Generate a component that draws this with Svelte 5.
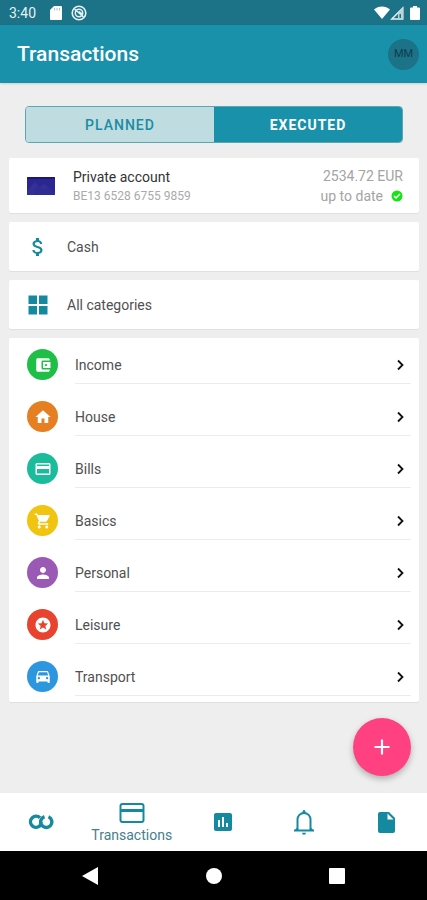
<script>
  const categories = [
    { name: 'Income', color: '#1fbf47', icon: 'M21 18v1c0 1.1-.9 2-2 2H5c-1.11 0-2-.9-2-2V5c0-1.1.89-2 2-2h14c1.1 0 2 .9 2 2v1h-9c-1.11 0-2 .9-2 2v8c0 1.1.89 2 2 2h9zm-9-2h10V8H12v8zm4-2.5c-.83 0-1.5-.67-1.5-1.5s.67-1.5 1.5-1.5 1.5.67 1.5 1.5-.67 1.5-1.5 1.5z' },
    { name: 'House', color: '#e67e22', icon: 'M10 20v-6h4v6h5v-8h3L12 3 2 12h3v8z' },
    { name: 'Bills', color: '#1abc9c', icon: 'M20 4H4c-1.11 0-1.99.89-1.99 2L2 18c0 1.11.89 2 2 2h16c1.11 0 2-.89 2-2V6c0-1.11-.89-2-2-2zm0 14H4v-6h16v6zm0-10H4V6h16v2z' },
    { name: 'Basics', color: '#f1c40f', icon: 'M7 18c-1.1 0-1.99.9-1.99 2S5.9 22 7 22s2-.9 2-2-.9-2-2-2zM1 2v2h2l3.6 7.59-1.35 2.45c-.16.28-.25.61-.25.96 0 1.1.9 2 2 2h12v-2H7.42c-.14 0-.25-.11-.25-.25l.03-.12.9-1.63h7.45c.75 0 1.41-.41 1.75-1.03l3.58-6.49A1 1 0 0 0 20 4H5.21l-.94-2H1zm16 16c-1.1 0-1.99.9-1.99 2s.89 2 1.99 2 2-.9 2-2-.9-2-2-2z' },
    { name: 'Personal', color: '#9b59b6', icon: 'M12 12c2.21 0 4-1.79 4-4s-1.79-4-4-4-4 1.79-4 4 1.79 4 4 4zm0 2c-2.67 0-8 1.34-8 4v2h16v-2c0-2.66-5.33-4-8-4z' },
    { name: 'Leisure', color: '#e8432f', icon: 'M11.99 2C6.47 2 2 6.48 2 12s4.47 10 9.99 10C17.52 22 22 17.52 22 12S17.52 2 11.99 2zm4.24 16L12 15.45 7.77 18l1.12-4.81-3.73-3.23 4.92-.42L12 5l1.92 4.53 4.92.42-3.73 3.23L16.23 18z' },
    { name: 'Transport', color: '#2c97de', icon: 'M18.92 5.01C18.72 4.42 18.16 4 17.5 4h-11c-.66 0-1.21.42-1.42 1.01L3 11v8c0 .55.45 1 1 1h1c.55 0 1-.45 1-1v-1h12v1c0 .55.45 1 1 1h1c.55 0 1-.45 1-1v-8l-2.08-5.99zM6.5 15c-.83 0-1.5-.67-1.5-1.5S5.67 12 6.5 12s1.5.67 1.5 1.5S7.33 15 6.5 15zm11 0c-.83 0-1.5-.67-1.5-1.5s.67-1.5 1.5-1.5 1.5.67 1.5 1.5-.67 1.5-1.5 1.5zM5 10l1.5-4.5h11L19 10H5z' }
  ];
  let tab = $state('executed');
</script>

<div class="screen">
  <div class="status">
    <span>3:40</span>
    <svg class="sd" viewBox="0 0 12 14" width="12" height="14"><path fill="#fff" d="M4 0h7a1 1 0 0 1 1 1v12a1 1 0 0 1-1 1H1a1 1 0 0 1-1-1V4z" /><path stroke="#9cc3ca" d="M4.500 2v2.500M7 2v2.500M9.500 2v2.500" /></svg>
    <svg viewBox="0 0 16 16" width="16" height="16" fill="none" stroke="#e6f1f3"><circle cx="8" cy="8" r="6.800" stroke-width="1.600" /><circle cx="8" cy="8" r="3.700" stroke-width="1.500" /><path stroke-width="1.600" d="M3.500 4l9 8M8 6.500l3 2.500" /></svg>
    <span class="grow"></span>
    <svg viewBox="0 0 16 14" width="16" height="14"><path fill="#fff" d="M0 3.500C4.500-.6 11.500-.6 16 3.500L8 13z" /></svg>
    <svg viewBox="0 0 14 14" width="14" height="14"><path fill="none" stroke="#e6f1f3" stroke-width="1.500" d="M12.800 2v11H1.800z" /><path fill="#b9d3d8" d="M8 7l5-5v11H8z" /><path fill="#1c7286" d="M9.500 8h1.500v4H9.500z" /></svg>
    <svg class="battery" viewBox="0 0 10 14" width="10" height="14"><path fill="#fff" d="M3 0h4v1.500h2a1 1 0 0 1 1 1V13a1 1 0 0 1-1 1H1a1 1 0 0 1-1-1V2.500a1 1 0 0 1 1-1h2z" /></svg>
  </div>

  <header>
    <h1>Transactions</h1>
    <button class="avatar">MM</button>
  </header>

  <main>
    <div class="tabs">
      <button class:active={tab === 'planned'} onclick={() => (tab = 'planned')}>PLANNED</button>
      <button class:active={tab === 'executed'} onclick={() => (tab = 'executed')}>EXECUTED</button>
    </div>

    <section class="card account">
      <svg viewBox="0 0 28 18" width="28" height="18"><rect width="28" height="18" rx="1" fill="#2a2890" /><path fill="#333197" d="M0 14L8 5l5 5 4-3 11 9v2H0z" /><path fill="#2f2d94" d="M10 8l6 4 6-2 6 6v2H6z" /><path fill="#1b1580" d="M1 0h26a1 1 0 0 1 1 1v1H0V1a1 1 0 0 1 1-1z" /></svg>
      <div class="who">
        <span class="name">Private account</span>
        <span class="iban">BE13 6528 6755 9859</span>
      </div>
      <div class="amount">
        <span>2534.72 EUR</span>
        <span class="sync">up to date
          <svg viewBox="0 0 12 12" width="12" height="12"><circle cx="6" cy="6" r="5.500" fill="#14e314" /><path fill="none" stroke="#fff" stroke-width="1.500" d="M3 6l2 2 4-4" /></svg>
        </span>
      </div>
    </section>

    <button class="card link">
      <svg viewBox="0 0 24 24" width="24" height="24"><path fill="#1589a0" d="M11.800 10.900c-2.270-.59-3-1.200-3-2.150 0-1.090 1.010-1.850 2.700-1.850 1.780 0 2.440.85 2.500 2.100h2.210c-.07-1.720-1.120-3.300-3.210-3.810V3h-3v2.160c-1.940.42-3.500 1.680-3.500 3.610 0 2.310 1.910 3.460 4.700 4.130 2.500.6 3 1.480 3 2.410 0 .69-.49 1.790-2.700 1.790-2.060 0-2.870-.92-2.980-2.100h-2.200c.12 2.190 1.760 3.420 3.680 3.830V21h3v-2.150c1.950-.37 3.500-1.500 3.500-3.550 0-2.840-2.430-3.810-4.700-4.400z" /></svg>
      Cash
    </button>

    <button class="card link">
      <svg viewBox="0 0 24 24" width="24" height="24"><path fill="#1589a0" d="M2.500 2.500h8.500v8.500H2.500zM13 2.500h8.500v8.500H13zM2.500 13h8.500v8.500H2.500zM13 13h8.500v8.500H13z" /></svg>
      All categories
    </button>

    <div class="card list">
      {#each categories as c}
        <button class="row">
          <span class="dot" style:background={c.color}>
            <svg viewBox="0 0 24 24" width="18" height="18"><path fill="#fff" d={c.icon} /></svg>
          </span>
          <span class="label">
            {c.name}
            <svg viewBox="0 0 8 12" width="8" height="12"><path fill="none" stroke="#111" stroke-width="1.800" d="M2 1.500L6.500 6 2 10.500" /></svg>
          </span>
        </button>
      {/each}
    </div>

    <button class="fab" aria-label="Add transaction">
      <svg viewBox="0 0 16 16" width="16" height="16"><path stroke="#fff" stroke-width="2.200" d="M8 .5v15M.5 8h15" /></svg>
    </button>
  </main>

  <nav>
    <a href="#home" aria-label="Home">
      <svg viewBox="0 0 26 16" width="26" height="16" fill="none" stroke="#1589a0" stroke-width="3.400"><path d="M12 3.700A5.600 5.600 0 1 0 11.500 12.200Q13 10.800 13 8" /><path d="M16.500 2.600A5.600 5.600 0 1 0 20.500 2.800" /></svg>
    </a>
    <a href="#transactions" class="current">
      <svg viewBox="0 0 26 20" width="26" height="20" fill="none" stroke="#1589a0" stroke-width="2"><rect x="1.500" y="1" width="23" height="18" rx="2" /><path stroke-width="3" d="M1.500 7.500h23" /></svg>
      Transactions
    </a>
    <a href="#reports" aria-label="Reports">
      <svg viewBox="0 0 24 24" width="24" height="24"><path fill="#1589a0" d="M19 3H5c-1.100 0-2 .9-2 2v14c0 1.100.9 2 2 2h14c1.100 0 2-.9 2-2V5c0-1.100-.9-2-2-2zM9 17H7v-7h2v7zm4 0h-2V7h2v10zm4 0h-2v-4h2v4z" /></svg>
    </a>
    <a href="#alerts" aria-label="Notifications">
      <svg viewBox="0 0 20 25" width="20" height="25"><path fill="none" stroke="#1589a0" stroke-width="2" d="M0 20.500h20M3.500 20V9.500a6.500 6.500 0 0 1 13 0V20" /><path fill="#1589a0" d="M8.500 3V1.500a1.500 1.500 0 0 1 3 0V3zM3.500 17L.5 20.500h4zM16.500 17l3 3.500h-4zM8 22.800h4a2 2 0 0 1-4 0z" /></svg>
    </a>
    <a href="#documents" aria-label="Documents">
      <svg viewBox="0 0 17 21" width="17" height="21"><path fill="#1589a0" d="M2 0h9l6 6v13a2 2 0 0 1-2 2H2a2 2 0 0 1-2-2V2a2 2 0 0 1 2-2z" /><path fill="#fff" d="M9.500 1.500L15.500 7.500h-6z" /></svg>
    </a>
  </nav>

  <div class="system">
    <button aria-label="Back"><svg viewBox="0 0 16 18" width="16" height="18"><path fill="#fff" d="M16 0v18L0 9z" /></svg></button>
    <button aria-label="Home screen"><svg viewBox="0 0 16 16" width="16" height="16"><circle cx="8" cy="8" r="8" fill="#fff" /></svg></button>
    <button aria-label="Recent apps"><svg viewBox="0 0 16 16" width="16" height="16"><rect width="16" height="16" rx="1" fill="#fff" /></svg></button>
  </div>
</div>

<style>
  :global(body) { margin: 0; }
  .screen {
    min-height: 100vh;
    display: flex;
    flex-direction: column;
    background: #eee;
    color: #505050;
    font: 14px/20px Roboto, sans-serif;
  }
  button { font: inherit; color: inherit; border: 0; padding: 0; margin: 0; background: none; cursor: pointer; }
  svg { display: block; flex: none; }
  .status {
    height: 25px;
    display: flex;
    align-items: center;
    padding: 1px 7px 0 9px;
    box-sizing: border-box;
    background: #1c7286;
    color: #e6f1f3;
  }
  .sd { margin: 0 9px 0 14px; }
  .grow { flex: 1; }
  .battery { margin-left: 6px; }
  header {
    height: 58px;
    display: flex;
    align-items: center;
    justify-content: space-between;
    padding: 0 8px 0 17px;
    box-sizing: border-box;
    background: #1a91aa;
    box-shadow: 0 1px 2px #0002;
  }
  h1 { margin: 0; font-size: 21px; line-height: 28px; font-weight: 500; color: #fff; }
  .avatar { width: 31px; height: 31px; border-radius: 50%; background: #1c7286; color: #0e3d50; font-size: 11px; }
  main {
    flex: 1;
    position: relative;
    display: flex;
    flex-direction: column;
    gap: 9px;
    padding: 23px 8px 90px 9px;
  }
  .tabs {
    display: flex;
    height: 37px;
    margin: 0 16px 6px;
    box-sizing: border-box;
    border: 1px solid #5aa7b4;
    border-radius: 4px;
    overflow: hidden;
  }
  .tabs button { flex: 1; background: #bfdce0; color: #1a8ca3; font-weight: 500; letter-spacing: 1px; }
  .tabs .active { background: #1a91aa; color: #fff; font-weight: 700; }
  .card { background: #fff; border-radius: 2px; box-shadow: 0 1px 1px #0001; }
  .account { display: flex; align-items: center; height: 55px; padding: 0 16px 0 18px; }
  .who { flex: 1; display: flex; flex-direction: column; margin-left: 18px; }
  .name { color: #333; }
  .iban { font-size: 12px; line-height: 18px; color: #aaa; }
  .amount { display: flex; flex-direction: column; align-items: flex-end; color: #a4a4a4; }
  .sync { display: flex; align-items: center; gap: 8px; }
  .link { display: flex; align-items: center; gap: 17px; height: 49px; padding: 0 17px; text-align: left; }
  .list { display: flex; flex-direction: column; }
  .row { display: flex; height: 52px; padding: 0 8px 0 18px; }
  .dot {
    display: flex;
    align-items: center;
    justify-content: center;
    width: 31px;
    height: 31px;
    margin: 11px 17px 0 0;
    border-radius: 50%;
  }
  .label {
    flex: 1;
    display: flex;
    align-items: center;
    justify-content: space-between;
    height: 37px;
    padding: 8px 7px 0 0;
    border-bottom: 1px solid #ececec;
  }
  .fab {
    position: absolute;
    right: 16px;
    bottom: 17px;
    display: grid;
    place-items: center;
    width: 58px;
    height: 58px;
    border-radius: 50%;
    background: #ff4081;
    box-shadow: 0 3px 6px #0004;
  }
  nav { display: flex; height: 58px; background: #fff; }
  nav a {
    flex: 1;
    display: flex;
    flex-direction: column;
    align-items: center;
    justify-content: center;
    gap: 2px;
    color: #45808e;
    text-decoration: none;
  }
  nav .current { flex: 0 0 100px; padding-top: 3px; }
  .system { display: flex; height: 49px; padding: 0 28px; background: #000; }
  .system button { flex: 1; display: grid; place-items: center; }
</style>
